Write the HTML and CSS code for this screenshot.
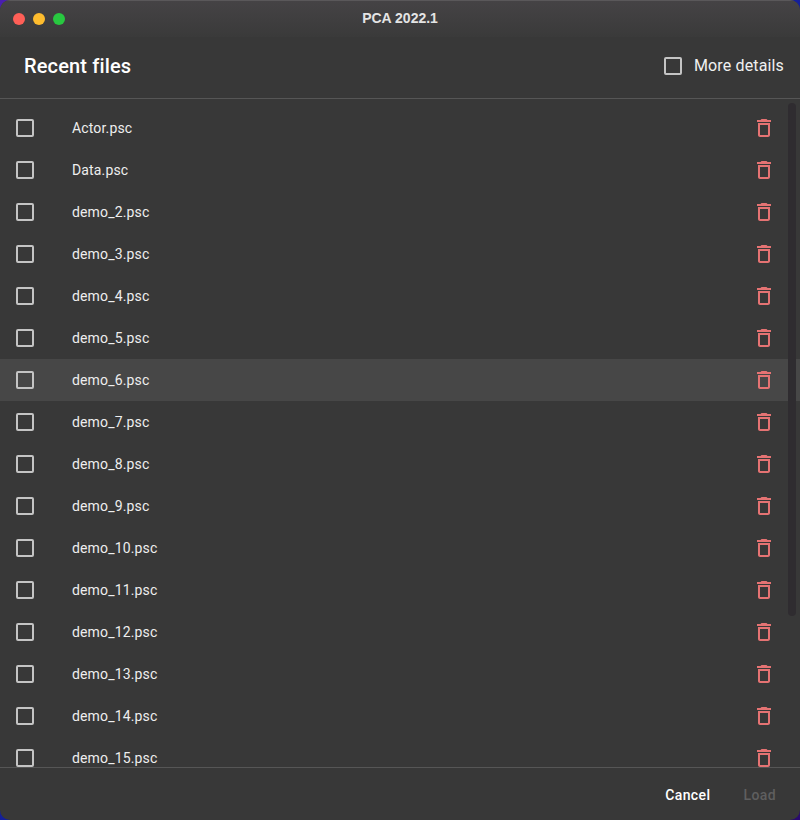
FILE: index.html
```html
<!DOCTYPE html>
<html lang="en">
<head>
    <meta charset="UTF-8">
    <title>PCA 2022.1</title>
    <link rel="stylesheet" href="styles.css">
</head>
<body>

<svg class="icon-defs" width="0" height="0">
    <symbol id="trash" viewBox="0 0 24 24">
        <path d="M6 19c0 1.1.9 2 2 2h8c1.1 0 2-.9 2-2V7H6v12zM8 9h8v10H8V9zm7.5-5l-1-1h-5l-1 1H5v2h14V4h-3.5z" fill="currentColor"/>
    </symbol>
</svg>

<div class="window">
    <div class="titlebar">
        <div class="lights">
            <span class="light red"></span>
            <span class="light yellow"></span>
            <span class="light green"></span>
        </div>
        <div class="title">PCA 2022.1</div>
    </div>

    <div class="header">
        <h1>Recent files</h1>
        <label class="more"><span class="check"></span>More details</label>
    </div>

    <div class="list">
        <div class="row"><span class="check"></span><span class="name">Actor.psc</span><svg class="trash"><use href="#trash"/></svg></div>
        <div class="row"><span class="check"></span><span class="name">Data.psc</span><svg class="trash"><use href="#trash"/></svg></div>
        <div class="row"><span class="check"></span><span class="name">demo_2.psc</span><svg class="trash"><use href="#trash"/></svg></div>
        <div class="row"><span class="check"></span><span class="name">demo_3.psc</span><svg class="trash"><use href="#trash"/></svg></div>
        <div class="row"><span class="check"></span><span class="name">demo_4.psc</span><svg class="trash"><use href="#trash"/></svg></div>
        <div class="row"><span class="check"></span><span class="name">demo_5.psc</span><svg class="trash"><use href="#trash"/></svg></div>
        <div class="row hover"><span class="check"></span><span class="name">demo_6.psc</span><svg class="trash"><use href="#trash"/></svg></div>
        <div class="row"><span class="check"></span><span class="name">demo_7.psc</span><svg class="trash"><use href="#trash"/></svg></div>
        <div class="row"><span class="check"></span><span class="name">demo_8.psc</span><svg class="trash"><use href="#trash"/></svg></div>
        <div class="row"><span class="check"></span><span class="name">demo_9.psc</span><svg class="trash"><use href="#trash"/></svg></div>
        <div class="row"><span class="check"></span><span class="name">demo_10.psc</span><svg class="trash"><use href="#trash"/></svg></div>
        <div class="row"><span class="check"></span><span class="name">demo_11.psc</span><svg class="trash"><use href="#trash"/></svg></div>
        <div class="row"><span class="check"></span><span class="name">demo_12.psc</span><svg class="trash"><use href="#trash"/></svg></div>
        <div class="row"><span class="check"></span><span class="name">demo_13.psc</span><svg class="trash"><use href="#trash"/></svg></div>
        <div class="row"><span class="check"></span><span class="name">demo_14.psc</span><svg class="trash"><use href="#trash"/></svg></div>
        <div class="row"><span class="check"></span><span class="name">demo_15.psc</span><svg class="trash"><use href="#trash"/></svg></div>
        <div class="scrollbar"></div>
    </div>

    <div class="footer">
        <button class="btn">Cancel</button>
        <button class="btn disabled">Load</button>
    </div>
</div>

</body>
</html>
```

FILE: styles.css
```css
html, body {
    margin: 0;
    padding: 0;
    height: 100%;
}
body {
    font-family: Roboto, sans-serif;
    background: linear-gradient(135deg, #4a1fb0, #14209a 50%, #2a0a70);
    overflow: hidden;
}
.icon-defs {
    position: absolute;
}
.window {
    height: 820px;
    display: flex;
    flex-direction: column;
    background-color: #383838;
    border-radius: 10px;
    overflow: hidden;
    color: #fff;
}
.titlebar {
    height: 37px;
    flex: none;
    display: flex;
    align-items: center;
    position: relative;
    background: linear-gradient(#454345, #3a3a3a);
    border-top: 1px solid #5a585a;
    box-sizing: border-box;
}
.lights {
    display: flex;
    gap: 8px;
    padding-left: 13px;
}
.light {
    width: 12px;
    height: 12px;
    border-radius: 50%;
}
.red { background-color: #ff5f57; }
.yellow { background-color: #febc2e; }
.green { background-color: #28c840; }
.title {
    position: absolute;
    top: 8px;
    left: 0;
    right: 0;
    text-align: center;
    font-family: "Liberation Sans", Arial, sans-serif;
    font-weight: bold;
    font-size: 14px;
    line-height: 18px;
    color: #e4e4e4;
}
.header {
    height: 57px;
    flex: none;
    display: flex;
    align-items: center;
    justify-content: space-between;
    padding: 0 16px 4px 24px;
    border-bottom: 1px solid #565656;
}
h1 {
    margin: 0;
    font-size: 20px;
    font-weight: 500;
    letter-spacing: 0.15px;
}
.more {
    display: flex;
    align-items: center;
    gap: 12px;
    font-size: 16px;
    letter-spacing: 0.15px;
    color: #f0f0f0;
}
.check {
    width: 14px;
    height: 14px;
    flex: none;
    border: 2px solid #c4c4c4;
    border-radius: 2px;
}
.list {
    flex: 1;
    min-height: 0;
    overflow: hidden;
    position: relative;
    padding-top: 8px;
}
.row {
    height: 42px;
    display: flex;
    align-items: center;
    padding: 0 24px 0 16px;
}
.row.hover {
    background-color: #474747;
}
.name {
    flex: 1;
    margin-left: 38px;
    font-size: 14px;
    letter-spacing: 0.15px;
    color: #eee;
}
.trash {
    width: 24px;
    height: 24px;
    color: #e57373;
}
.scrollbar {
    position: absolute;
    top: 4px;
    right: 4px;
    width: 8px;
    height: 513px;
    border-radius: 4px;
    background-color: #2f2c30;
}
.footer {
    height: 50px;
    flex: none;
    display: flex;
    align-items: center;
    justify-content: flex-end;
    gap: 17px;
    padding: 2px 16px 0 0;
    border-top: 1px solid #565656;
}
.btn {
    font-family: Roboto, sans-serif;
    font-size: 14px;
    font-weight: 500;
    letter-spacing: 0.4px;
    color: #fff;
    background: none;
    border: none;
    padding: 6px 8px;
}
.btn.disabled {
    color: #5f5f5f;
}
```
